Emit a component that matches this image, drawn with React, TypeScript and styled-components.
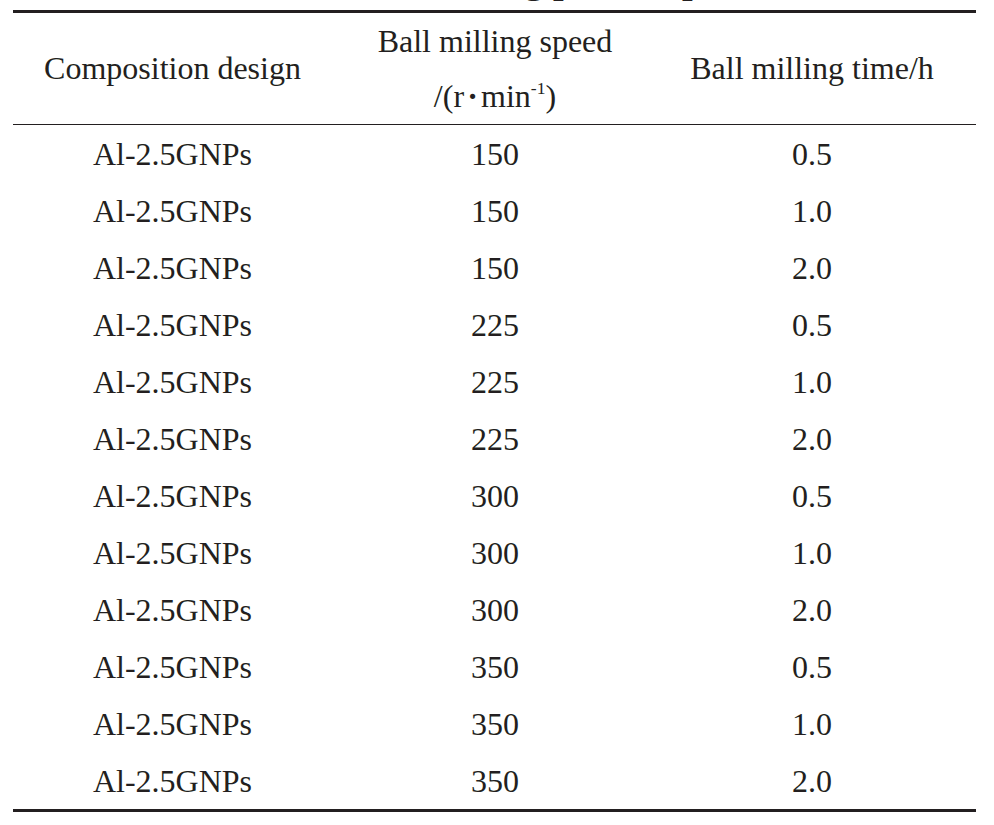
import styled, { createGlobalStyle } from 'styled-components';

const GlobalStyle = createGlobalStyle`
  html, body {
    margin: 0;
    padding: 0;
    background: #ffffff;
  }
  body {
    font-family: 'Liberation Serif', 'Times New Roman', serif;
    color: #231f20;
  }
`;

const Page = styled.div`
  width: 994px;
  height: 825px;
  overflow: hidden;
  box-sizing: border-box;
  padding: 0 18px 0 13px;
`;

// only the descenders of the caption peek in at the top edge
const Caption = styled.div`
  margin-top: -40px;
  height: 40px;
  line-height: 40px;
  padding-left: 214px;
  font-size: 38px;
  font-weight: 700;
  white-space: nowrap;
`;

const Table = styled.div`
  margin-top: 10px;
  border-top: 3px solid #231f20;
  border-bottom: 3px solid #231f20;
`;

const Columns = styled.div`
  display: grid;
  grid-template-columns: 319px 326px 308px;
`;

const HeadRow = styled(Columns)`
  height: 111px;
  border-bottom: 1px solid #231f20;
`;

const HeadCell = styled.div`
  display: flex;
  flex-direction: column;
  align-items: center;
  justify-content: center;
  font-size: 32px;
  line-height: 55px;
  white-space: nowrap;
`;

const Sup = styled.sup`
  font-size: 0.55em;
  line-height: 0;
  vertical-align: 0.75em;
`;

const Dot = styled.span`
  margin: 0 0.1em;
  font-weight: 700;
`;

const Row = styled(Columns)`
  height: 57px;
`;

const Cell = styled.div`
  box-sizing: border-box;
  padding-top: 2px;
  font-size: 32px;
  line-height: 55px;
  text-align: center;
  white-space: nowrap;
`;

const rows: [string, string, string][] = [
  ['Al-2.5GNPs', '150', '0.5'],
  ['Al-2.5GNPs', '150', '1.0'],
  ['Al-2.5GNPs', '150', '2.0'],
  ['Al-2.5GNPs', '225', '0.5'],
  ['Al-2.5GNPs', '225', '1.0'],
  ['Al-2.5GNPs', '225', '2.0'],
  ['Al-2.5GNPs', '300', '0.5'],
  ['Al-2.5GNPs', '300', '1.0'],
  ['Al-2.5GNPs', '300', '2.0'],
  ['Al-2.5GNPs', '350', '0.5'],
  ['Al-2.5GNPs', '350', '1.0'],
  ['Al-2.5GNPs', '350', '2.0'],
];

const App = () => {
  return (
    <>
      <GlobalStyle />
      <Page>
        <Caption>Table 1 Ball milling process parameters</Caption>
        <Table>
          <HeadRow>
            <HeadCell>Composition design</HeadCell>
            <HeadCell>
              <span>Ball milling speed</span>
              <span>
                /(r<Dot>·</Dot>min<Sup>-1</Sup>)
              </span>
            </HeadCell>
            <HeadCell>Ball milling time/h</HeadCell>
          </HeadRow>
          {rows.map((r, i) => (
            <Row key={i}>
              <Cell>{r[0]}</Cell>
              <Cell>{r[1]}</Cell>
              <Cell>{r[2]}</Cell>
            </Row>
          ))}
        </Table>
      </Page>
    </>
  );
};

export default App;
